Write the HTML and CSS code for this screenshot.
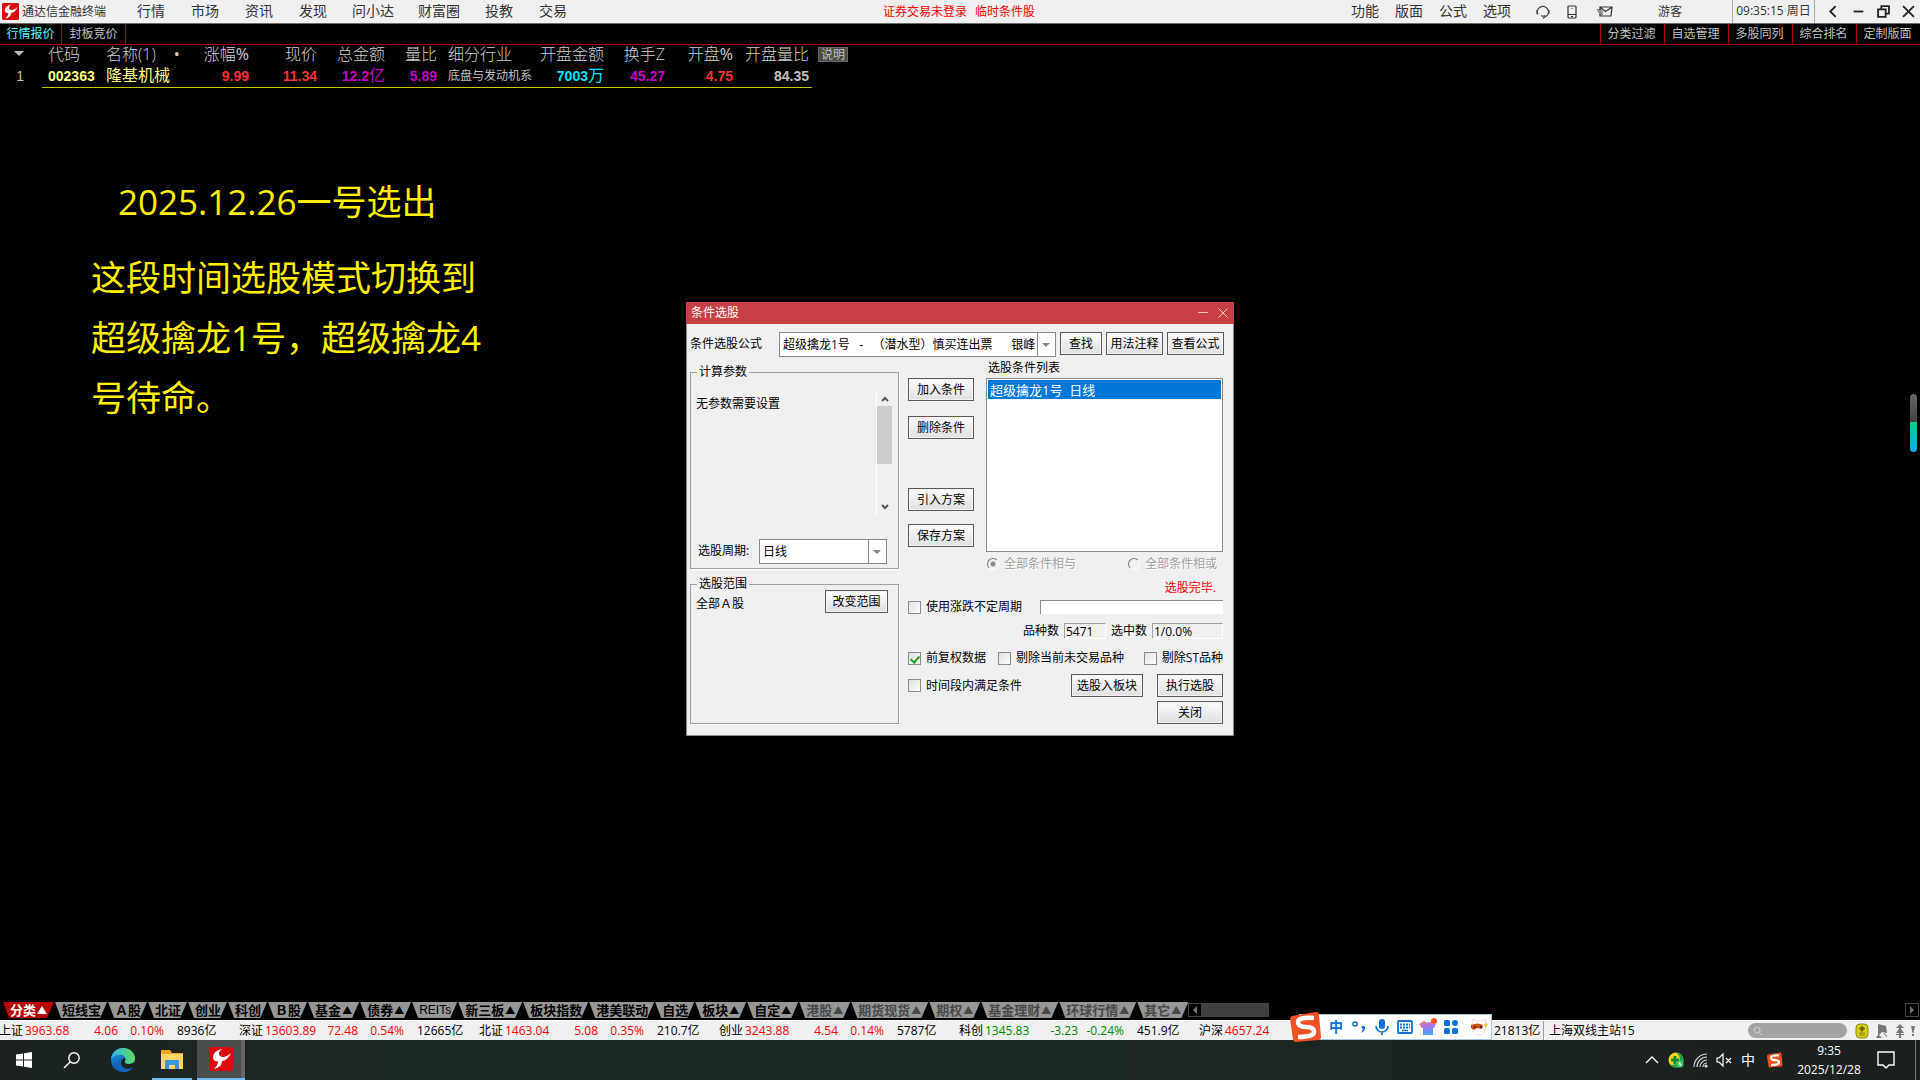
FILE: index.html
```html
<!DOCTYPE html>
<html lang="zh-CN">
<head>
  <meta charset="UTF-8" />
  <meta name="viewport" content="width=device-width, initial-scale=1.0"/>
  <title>通达信金融终端</title>
  <link rel="stylesheet" href="styles.css">
</head>
<body>
  <header class="topbar">
    <svg class="logo" viewBox="0 0 24 24"><use href="#tdx"/></svg>
    <span class="app-name">通达信金融终端</span>
    <nav class="menu">
      <a href="#">行情</a><a href="#">市场</a><a href="#">资讯</a><a href="#">发现</a><a href="#" class="long">问小达</a><a href="#" class="long">财富圈</a><a href="#">投教</a><a href="#">交易</a>
    </nav>
    <p class="notice"><span>证券交易未登录</span><span>临时条件股</span></p>
    <nav class="menu tools">
      <a href="#">功能</a><a href="#">版面</a><a href="#">公式</a><a href="#">选项</a>
    </nav>
    <div class="top-icons">
      <svg width="16" height="16" viewBox="0 0 16 16" fill="none" stroke="#444" stroke-width="1.2"><path d="M3 10.500A5.500 5.500 0 1 1 12.500 11L8 14.500"/><path d="M2 6v4M14 6v4M6 11.500q2 1.500 4 0"/></svg>
      <svg width="10" height="14" viewBox="0 0 10 14" fill="none" stroke="#333" stroke-width="1.200"><rect x="1" y="1" width="8" height="12" rx="1"/><path d="M1 9.500h8M4 11.500h2M4.500 3.500h1"/></svg>
      <svg width="16" height="12" viewBox="0 0 16 12" fill="none" stroke="#333" stroke-width="1.200"><path d="M3 4V1h12l-1 9H3V8M3.500 1.500l5 4 6-4M0 4h5M1 6h5M2 8h4"/></svg>
    </div>
    <span class="guest">游客</span>
    <time class="clock">09:35:15 周日</time>
    <div class="win-buttons">
      <button aria-label="返回"><svg viewBox="0 0 12 12"><path d="M8 1L3 6l5 5"/></svg></button>
      <button aria-label="最小化"><svg viewBox="0 0 12 12"><path d="M1.500 6h9"/></svg></button>
      <button aria-label="还原"><svg viewBox="0 0 12 12"><path d="M1 4h7v7H1zM4 4V1h7v7H8"/></svg></button>
      <button aria-label="关闭"><svg viewBox="0 0 12 12"><path d="M1 1l10 10M11 1L1 11"/></svg></button>
    </div>
  </header>

  <nav class="tabs">
    <a href="#" class="active">行情报价</a><a href="#">封板竞价</a>
    <div class="tabs-right">
      <a href="#">分类过滤</a><a href="#">自选管理</a><a href="#">多股同列</a><a href="#">综合排名</a><a href="#">定制版面</a>
    </div>
  </nav>

  <main>
    <div class="quote-wrap">
      <table class="quotes">
        <colgroup>
          <col class="c-idx"><col class="c-code"><col class="c-name"><col class="c-rise"><col class="c-num"><col class="c-num"><col class="c-ratio"><col class="c-trade"><col class="c-open"><col class="c-turn"><col class="c-num"><col class="c-last">
        </colgroup>
        <thead>
          <tr><th><i class="down"></i></th><th class="l">代码</th><th class="l">名称(1)<b class="dot">•</b></th><th>涨幅<b>%</b></th><th>现价</th><th>总金额</th><th>量比</th><th class="trade">细分行业</th><th>开盘金额</th><th>换手Z</th><th>开盘<b>%</b></th><th>开盘量比</th></tr>
        </thead>
        <tbody>
          <tr><td class="idx">1</td><td class="l yellow">002363</td><td class="l name">隆基机械</td><td class="red">9.99</td><td class="red">11.34</td><td class="purple">12.2<span>亿</span></td><td class="purple">5.89</td><td class="trade">底盘与发动机系</td><td class="cyan">7003<span>万</span></td><td class="purple">45.27</td><td class="red">4.75</td><td>84.35</td></tr>
        </tbody>
      </table>
      <button class="explain">说明</button>
    </div>

    <section class="memo">
      <h1>2025.12.26一号选出</h1>
      <p>这段时间选股模式切换到超级擒龙1号，超级擒龙4号待命。</p>
    </section>

    <div class="side-handle"></div>
  </main>

  <section class="dialog" role="dialog" aria-labelledby="dlgTitle">
    <div class="dialog-title">
      <h2 id="dlgTitle">条件选股</h2>
      <button aria-label="最小化"><svg viewBox="0 0 10 10"><path d="M0 4.500h10"/></svg></button>
      <button aria-label="关闭"><svg viewBox="0 0 10 10"><path d="M.5.5l9 9M9.500.5l-9 9"/></svg></button>
    </div>
    <form class="dialog-body">
      <div class="formula-row">
        <label for="formula">条件选股公式</label>
        <div class="combo"><select id="formula"><option>超级擒龙1号&nbsp;&nbsp;&nbsp;-&nbsp;&nbsp;&nbsp;（潜水型）慎买连出票&nbsp;&nbsp;&nbsp;&nbsp;&nbsp;&nbsp;银峰</option></select></div>
        <button type="button" class="btn find">查找</button>
        <button type="button" class="btn">用法注释</button>
        <button type="button" class="btn">查看公式</button>
      </div>

      <div class="columns">
        <div class="left">
          <fieldset class="params">
            <legend>计算参数</legend>
            <div class="param-area">
              <span>无参数需要设置</span>
              <div class="scrollbar">
                <svg viewBox="0 0 16 16"><path d="M5 11l3-3 3 3"/></svg>
                <div class="thumb"></div>
                <svg viewBox="0 0 16 16"><path d="M5 6l3 3 3-3"/></svg>
              </div>
            </div>
            <div class="period">
              <label for="period">选股周期:</label>
              <div class="combo"><select id="period"><option>日线</option></select></div>
            </div>
          </fieldset>
          <fieldset class="range">
            <legend>选股范围</legend>
            <div class="range-row">
              <span>全部Ａ股</span>
              <button type="button" class="btn">改变范围</button>
            </div>
          </fieldset>
        </div>

        <div class="right">
          <div class="pick">
            <div class="pick-buttons">
              <button type="button" class="btn">加入条件</button>
              <button type="button" class="btn remove">删除条件</button>
              <button type="button" class="btn plan">引入方案</button>
              <button type="button" class="btn">保存方案</button>
            </div>
            <div class="pick-list">
              <label for="conds">选股条件列表</label>
              <select id="conds" size="9"><option selected>超级擒龙1号&nbsp;&nbsp;日线</option></select>
              <div class="radios">
                <label><input type="radio" name="join" checked disabled>全部条件相与</label>
                <label><input type="radio" name="join" disabled>全部条件相或</label>
              </div>
            </div>
          </div>
          <p class="done">选股完毕.</p>
          <div class="row cycle">
            <label><input type="checkbox">使用涨跌不定周期</label>
            <input type="text" class="cycle-text" aria-label="周期">
          </div>
          <div class="row counts">
            <label for="total">品种数</label><input id="total" type="text" class="total" value="5471" readonly>
            <label for="hits">选中数</label><input id="hits" type="text" class="hits" value="1/0.0%" readonly>
          </div>
          <div class="row filters">
            <label><input type="checkbox" checked>前复权数据</label>
            <label><input type="checkbox">剔除当前未交易品种</label>
            <label class="st"><input type="checkbox">剔除ST品种</label>
          </div>
          <div class="row actions">
            <label><input type="checkbox">时间段内满足条件</label>
            <button type="button" class="btn block-btn">选股入板块</button>
            <button type="button" class="btn main-btn">执行选股</button>
          </div>
          <div class="row close-row"><button type="button" class="btn main-btn">关闭</button></div>
        </div>
      </div>
    </form>
  </section>

  <nav class="sheet-tabs">
    <a href="#" class="active">分类<i>▲</i></a><a href="#">短线宝</a><a href="#">Ａ股</a><a href="#">北证</a><a href="#">创业</a><a href="#">科创</a><a href="#">Ｂ股</a><a href="#">基金<i>▲</i></a><a href="#">债券<i>▲</i></a><a href="#" class="latin">REITs</a><a href="#">新三板<i>▲</i></a><a href="#">板块指数</a><a href="#">港美联动</a><a href="#">自选</a><a href="#">板块<i>▲</i></a><a href="#">自定<i>▲</i></a><a href="#" class="dim">港股<i>▲</i></a><a href="#" class="dim">期货现货<i>▲</i></a><a href="#" class="dim">期权<i>▲</i></a><a href="#" class="dim">基金理财<i>▲</i></a><a href="#" class="dim">环球行情<i>▲</i></a><a href="#" class="dim">其它<i>▲</i></a>
    <div class="hscroll">
      <button aria-label="向左"><svg viewBox="0 0 12 12"><path d="M8 2v8L4 6z"/></svg></button>
      <div class="hthumb"></div>
      <button aria-label="向右" class="end"><svg viewBox="0 0 12 12"><path d="M4 2v8l4-4z"/></svg></button>
    </div>
  </nav>

  <footer class="ticker">
    <div class="index up"><b>上证</b><span>3963.68</span><span>4.06</span><span>0.10%</span><em>8936亿</em></div>
    <div class="index up"><b>深证</b><span>13603.89</span><span>72.48</span><span>0.54%</span><em>12665亿</em></div>
    <div class="index up"><b>北证</b><span>1463.04</span><span>5.08</span><span>0.35%</span><em>210.7亿</em></div>
    <div class="index up"><b>创业</b><span>3243.88</span><span>4.54</span><span>0.14%</span><em>5787亿</em></div>
    <div class="index fall"><b>科创</b><span>1345.83</span><span>-3.23</span><span>-0.24%</span><em>451.9亿</em></div>
    <div class="index up hs"><b>沪深</b><span>4657.24</span></div>
    <span class="turnover">21813亿</span>
    <span class="station">上海双线主站15</span>
    <div class="status">
      <label class="search"><svg viewBox="0 0 12 12"><circle cx="5" cy="5" r="3.500"/><path d="M7.500 7.500L11 11"/></svg><input type="text" aria-label="搜索"></label>
      <svg width="14" height="16" viewBox="0 0 14 16"><rect x="1" y="1" width="12" height="14" rx="4" fill="#d9cf1c" stroke="#8f8800"/><path d="M7 3l3 3H8v2H6V6H4zM4 10h6M4 12h6" fill="#6e6800" stroke="#6e6800" stroke-width=".8"/></svg>
      <svg width="14" height="14" viewBox="0 0 14 14" fill="#777"><path d="M3 0l8 2 1 7-5-1-3 3 3 3H1l2-3V7z"/><path d="M9 9l3 4" stroke="#777"/></svg>
      <svg width="10" height="14" viewBox="0 0 10 14" fill="#777"><path d="M5 0l4 4H6v1l3 4H6v1h3v1H6v3H4v-3H1v-1h3V9H1l3-4V4H1z"/></svg>
      <svg width="4" height="14" viewBox="0 0 4 14" fill="#777"><path d="M0 2h4L2.500 9h-1zM1 10h2v2H1z"/></svg>
    </div>
  </footer>

  <aside class="ime">
    <svg class="ime-logo" viewBox="0 0 32 32"><use href="#sogou"/></svg>
    <b>中</b>
    <svg viewBox="0 0 18 18"><circle cx="5" cy="6" r="2" fill="none" stroke="#1070d8" stroke-width="1.500"/><path d="M12 8a2 2 0 0 1 3 2q0 3-4 5l2-4a2 2 0 0 1-1-3z" fill="#1070d8"/></svg>
    <svg viewBox="0 0 18 18"><rect x="6" y="1" width="6" height="10" rx="3" fill="#1070d8"/><path d="M3 8a6 6 0 0 0 12 0M9 14v3" fill="none" stroke="#1070d8" stroke-width="1.600"/></svg>
    <svg viewBox="0 0 18 18"><rect x="2" y="3" width="14" height="12" rx="1" fill="none" stroke="#1070d8" stroke-width="1.800"/><path d="M4 6.500h10M4 9.500h10" stroke="#1070d8" stroke-width="1.800" stroke-dasharray="2 1"/><path d="M6 12.500h6" stroke="#1070d8" stroke-width="1.500"/></svg>
    <svg viewBox="0 0 18 18"><defs><linearGradient id="shirt" x2=".3" y2="1"><stop stop-color="#ff7d62"/><stop offset=".5" stop-color="#a774ec"/><stop offset="1" stop-color="#4aa4ff"/></linearGradient></defs><path d="M5 3q4 3 8 0l4 3-2 4h-1v7H4v-7H3L0 6z" fill="url(#shirt)"/><circle cx="15" cy="3" r="3" fill="#ff5233"/></svg>
    <svg viewBox="0 0 18 18" fill="#1070d8"><rect x="2" y="2" width="6" height="6" rx="1.500"/><rect x="10" y="2" width="6" height="6" rx="3"/><rect x="2" y="10" width="6" height="6" rx="1.500"/><rect x="10" y="10" width="6" height="6" rx="1.500"/></svg>
    <svg viewBox="0 0 18 18"><path d="M3 1l3 2h6l3-2 1 9q-1 7-7 7T2 10z" fill="#fff" stroke="#e9dfe2"/><path d="M1 7q7-3 12 0l-1 4-5-1-3 2-3-2z" fill="#c9500f"/><circle cx="5" cy="9" r="1" fill="#311"/><circle cx="11" cy="9" r="1" fill="#311"/><path d="M16 4l1 2 1 1-1 1-1 2-1-2-1-1 1-1z" fill="#ffc52e"/></svg>
  </aside>

  <div class="taskbar">
    <button class="task" aria-label="开始"><svg width="18" height="18" viewBox="0 0 18 18" fill="#fff"><path d="M1 3.500L8 2.500V8.500H1zM9 2.300L17 1v7.500H9zM1 9.500h7v6L1 14.500zM9 9.500h8V17L9 15.700z"/></svg></button>
    <button class="task" aria-label="搜索"><svg width="18" height="18" viewBox="0 0 18 18" fill="none" stroke="#fff" stroke-width="1.400"><circle cx="11" cy="7" r="5.200"/><path d="M7.300 10.700L1 17"/></svg></button>
    <button class="task" aria-label="Edge">
      <svg width="24" height="24" viewBox="0 0 24 24">
        <defs>
          <linearGradient id="e1" x2="1"><stop stop-color="#2fb6ea"/><stop offset="1" stop-color="#5cdd61"/></linearGradient>
          <linearGradient id="e2" y2="1" x2=".3"><stop stop-color="#1b9de2"/><stop offset="1" stop-color="#1250a4"/></linearGradient>
        </defs>
        <circle cx="12" cy="12" r="12" fill="url(#e2)"/>
        <path d="M0 11C1 4 6 0 12 0c7 0 12 5 12 10 0 4-3 6-6 6-4 0-5-1-4-3 2-4-2-7-6-6-4 0-7 2-8 4z" fill="url(#e1)"/>
        <path d="M14 13c-1 2 1 3 4 3 2 0 4-1 5-2l1 4-3 2c-4 2-11 0-11-5 0-2 1-4 3-5 1 0 2 1 1 3z" fill="#192421"/>
        <path d="M10 11c-3 4 0 10 6 10 3 0 5-1 6-2-3 5-9 6-13 4-5-3-4-10 1-12z" fill="#1764bd"/>
      </svg>
    </button>
    <button class="task open" aria-label="文件资源管理器"><svg width="24" height="22" viewBox="0 0 24 22"><path d="M1 2h9l2 3h11v16H1z" fill="#e8a526"/><path d="M1 6h22v15H1z" fill="#ffd667"/><path d="M5 21v-8q0-1 1-1h12q1 0 1 1v8h-4v-4H9v4z" fill="#3a94de"/></svg></button>
    <button class="task open current" aria-label="通达信">
      <svg width="24" height="24" viewBox="0 0 24 24">
        <g id="tdx"><rect width="24" height="24" rx="2" fill="#dc0a0f"/><path d="M13 2Q8 6 11 9q4 3 11-3-3 7-9 8 0 6-8 8 4-4 4-8-5 1-5-4 0-6 9-8z" fill="#fff"/></g>
      </svg>
    </button>
    <div class="tray">
      <svg viewBox="0 0 16 16" fill="none" stroke="#fff" stroke-width="1.300"><path d="M2 11l6-6 6 6"/></svg>
      <svg viewBox="0 0 16 16"><circle cx="8" cy="8" r="7.500" fill="#f4d520"/><path d="M8 .5a7.500 7.500 0 0 1 0 15q-4 0-6-3 6 1 9-3t-3-9z" fill="#18a94b"/><path d="M7 4v8M3 8h8" stroke="#13893b" stroke-width="3"/><circle cx="12" cy="12" r="3.500" fill="#3ec96c"/><path d="M12 10l-1 2h2l-1 2" stroke="#fff" fill="none"/></svg>
      <svg viewBox="0 0 16 16" fill="none" stroke="#d5d9d8" stroke-width="1.200"><path d="M2 15A13 13 0 0 1 15 2M5 15A10 10 0 0 1 15 5M8 15a7 7 0 0 1 7-7M11 15a4 4 0 0 1 4-4"/><circle cx="14" cy="14" r="1" fill="#fff"/></svg>
      <svg viewBox="0 0 16 16" fill="none" stroke="#fff" stroke-width="1.200"><path d="M1 6h2l4-4v12l-4-4H1zM10 6l5 5M15 6l-5 5"/></svg>
      <b>中</b>
      <svg viewBox="0 0 32 32"><g id="sogou"><path d="M2 5L26 1q3 0 3 3l2 22q0 3-3 3L6 31q-3 0-3-3L0 8q0-2 2-3z" fill="#f05223"/><path d="M24 7Q8 6 8 11t8 5 8 5-16 5" fill="none" stroke="#fff" stroke-width="4.500"/></g></svg>
      <time><span>9:35</span><span>2025/12/28</span></time>
      <svg class="note" viewBox="0 0 18 18" fill="none" stroke="#fff" stroke-width="1.400"><path d="M1 1h16v13h-5l-3 3-3-3H1z"/></svg>
      <i class="peek"></i>
    </div>
  </div>
</body>
</html>
```

FILE: styles.css
```css
* { box-sizing: border-box; }
body { margin: 0; height: 100vh; display: flex; flex-direction: column; background: #000; color: #c0c0c0; font: 12px/16px "Open Sans", "Noto Sans CJK SC", sans-serif; overflow: hidden; }
a { color: inherit; text-decoration: none; }
h1, h2, p { margin: 0; font-weight: normal; }
button, input, select { font: inherit; color: inherit; margin: 0; padding: 0; border: 0; background: none; border-radius: 0; outline: 0; }
svg { display: block; flex: none; }
em, i { font-style: normal; }

/* top menu */
.topbar { display: flex; align-items: center; height: 24px; background: #f0f0f0; border-bottom: 1px solid #6a6a6a; color: #333; line-height: 14px; white-space: nowrap; }
.logo { width: 17px; height: 19px; margin: 0 3px 0 2px; }
.app-name { width: 102px; }
.menu { display: flex; padding-bottom: 2px; font-size: 14px; }
.menu a { width: 54px; text-align: center; }
.menu .long { width: 66px; }
.notice { flex: 1; padding-left: 303px; color: #f00; }
.notice span { margin-right: 8px; }
.tools a { width: 44px; }
.top-icons { display: flex; align-items: center; gap: 16px; padding-left: 16px; }
.top-icons svg:last-child { margin-left: 4px; }
.guest { margin: 0 50px 0 45px; }
.clock { align-self: stretch; width: 83px; line-height: 22px; text-align: center; border-left: 1px solid #aaa; border-right: 1px solid #aaa; }
.win-buttons { display: flex; gap: 12px; padding: 0 5px 0 12px; }
.win-buttons svg { width: 13px; height: 13px; fill: none; stroke: #222; stroke-width: 1.700; }

.tabs { display: flex; height: 21px; border-bottom: 1px solid #b00000; line-height: 20px; }
.tabs a { width: 64px; text-align: center; border-right: 1px solid #b00000; }
.tabs .active { width: 62px; color: #54fcfc; }
.tabs-right { display: flex; margin-left: auto; }
.tabs-right a { padding-right: 2px; border-right: 0; border-left: 1px solid #b00000; }

/* quotes */
main { flex: 1; position: relative; }
.quote-wrap { display: flex; align-items: flex-start; }
.quotes { table-layout: fixed; width: 812px; border-collapse: collapse; white-space: nowrap; }
.c-idx { width: 42px; }
.c-code { width: 58px; }
.c-name { width: 84px; }
.c-rise { width: 65px; }
.c-num { width: 68px; }
.c-ratio { width: 52px; }
.c-trade { width: 95px; }
.c-open { width: 72px; }
.c-turn { width: 61px; }
.c-last { width: 79px; }
.quotes th { height: 20px; padding: 0 0 2px; font-size: 16px; font-weight: 300; text-align: right; line-height: 18px; color: #d0d0d0; }
.quotes td { height: 22px; padding: 0; font: bold 14px/20px "Liberation Sans", "Noto Sans CJK SC", sans-serif; text-align: right; border-bottom: 1px solid #c8c800; }
.quotes td span { font-size: 16px; font-weight: normal; }
.quotes th:last-child, .quotes td:last-child { padding-right: 3px; }
.quotes .l { text-align: left; padding-left: 6px; }
.quotes .idx { border: 0; padding-right: 18px; font-weight: normal; }
.quotes th.trade { text-align: left; padding-left: 11px; }
.quotes td.trade { text-align: left; padding-left: 11px; font-size: 12px; font-weight: normal; overflow: hidden; }
.quotes .name { color: #ffff80; font-size: 16px; font-weight: normal; }
.yellow { color: #ffff80; }
.red { color: #ff3232; }
.purple { color: #c000c0; }
.cyan { color: #00e6ff; }
.down { display: inline-block; margin-right: 18px; vertical-align: 4px; border: 5px solid transparent; border-top-color: #c0c0c0; border-bottom: 0; }
.dot { margin-left: 18px; }
.explain { margin: 2px 0 0 6px; width: 30px; height: 15px; line-height: 13px; background: #4c4c44; border: 1px solid #666; }

/* yellow memo */
.memo { padding: 84px 0 0 91px; color: #fff100; font-size: 35px; line-height: 60px; }
.memo h1 { padding-left: 27px; font-size: 35px; margin-bottom: 16px; }
.memo p { width: 400px; }

.side-handle { position: absolute; right: 3px; top: 349px; width: 7px; height: 58px; border-radius: 4px; background: linear-gradient(#666, #444 48%, #10cf8c 48%, #16a8f0); }

/* stock picking dialog */
.dialog { position: absolute; top: 302px; left: 50%; width: 548px; margin-left: -274px; background: #f0f0f0; color: #000; border: 1px solid #8a8a8a; border-top: 0; white-space: nowrap; }
.dialog-title { display: flex; gap: 10px; align-items: center; height: 22px; margin: 0 -1px; padding: 0 6px 0 5px; background: #c84044; color: #fff; }
.dialog-title h2 { flex: 1; font-size: 12px; }
.dialog-title svg { width: 10px; height: 10px; fill: none; stroke: #f0c8c8; }
.dialog-body { padding: 8px 10px 11px 3px; }
.formula-row { display: flex; gap: 4px; margin-right: -1px; }
.formula-row label { width: 85px; line-height: 24px; }
.formula-row .combo { flex: 1; }
.formula-row .btn { width: 57px; }
.formula-row .find { width: 42px; }
.btn { height: 23px; padding: 0; text-align: center; line-height: 19px; border: 1px solid #5a5a5a; background: linear-gradient(#fdfdfd, #dfdfdf); box-shadow: inset 0 0 0 1px #f4f4f4; }
.combo { position: relative; height: 25px; }
.combo select { appearance: none; width: 100%; height: 25px; padding-left: 3px; background: #fff linear-gradient(#8a8a8a, #8a8a8a) no-repeat right 17px top / 1px 25px; border: 1px solid #8a8a8a; }
.combo::after { content: ""; position: absolute; right: 6px; top: 11px; border: 4px solid transparent; border-top-color: #858585; border-bottom: 0; pointer-events: none; }

.columns { display: flex; gap: 9px; }
.left { width: 209px; padding-top: 7px; }
fieldset { min-width: 0; margin: 0; padding: 0; border: 1px solid #a0a0a0; box-shadow: 1px 1px #fff; }
legend { margin-left: 6px; padding: 0 2px; height: 16px; }
.params { margin-bottom: 7px; }
.param-area { display: flex; justify-content: space-between; height: 125px; margin: 10px 6px 24px 5px; }
.param-area span { padding-top: 6px; }
.scrollbar { display: flex; flex-direction: column; width: 16px; border-left: 1px solid #fff; }
.scrollbar svg { width: 16px; height: 16px; fill: none; stroke: #555; stroke-width: 2; }
.scrollbar .thumb { height: 58px; margin-bottom: auto; background: #cdcdcd; }
.period { display: flex; justify-content: space-between; padding: 0 11px 4px 7px; line-height: 24px; }
.period .combo { width: 128px; line-height: 16px; }
.range { height: 148px; }
.range-row { display: flex; justify-content: space-between; align-items: center; margin-top: -2px; padding: 0 10px 0 5px; }
.range-row span { padding-top: 4px; }
.range-row .btn { width: 63px; }

.right { flex: 1; }
.pick { display: flex; gap: 12px; }
.pick-buttons { display: flex; flex-direction: column; gap: 13px; width: 66px; padding-top: 21px; }
.remove { margin-top: 2px; }
.plan { margin-top: 36px; }
.pick-list { flex: 1; padding-top: 3px; }
.pick-list > label { display: block; padding-left: 2px; margin-bottom: 2px; }
.pick-list select { display: block; width: 100%; height: 174px; padding: 1px; font-size: 13px; background: #fff; border: 1px solid #8a8a8a; overflow: hidden; }
.pick-list option { height: 19px; min-height: 19px; padding: 0 2px; line-height: 19px; }
.pick-list option:checked { background: linear-gradient(#0078d7, #0078d7); -webkit-text-fill-color: #fff; }
.radios { display: flex; justify-content: space-between; margin-top: 4px; padding: 0 6px 0 1px; }
.right label { display: flex; align-items: center; gap: 5px; }
.radios label { color: #a0a0a0; text-shadow: 1px 1px #fff; }
input[type=radio] { appearance: none; width: 12px; height: 12px; border: 1px solid; border-color: #777 #fff #fff #777; border-radius: 50%; }
input[type=radio]:checked { background: radial-gradient(#888 2px, transparent 3px); }
input[type=checkbox] { appearance: none; display: flex; justify-content: center; width: 13px; height: 13px; border: 1px solid #8a8a8a; background: linear-gradient(135deg, #dfdfda, #fff); }
input[type=checkbox]:checked::after { content: ""; width: 4px; height: 7px; margin-top: 1px; border: solid #1a9f1a; border-width: 0 2px 2px 0; transform: rotate(40deg); }
.done { margin: 8px 7px 3px; color: #f00; text-align: right; }
.row { display: flex; align-items: center; }
.cycle { justify-content: space-between; height: 16px; margin-bottom: 8px; }
.cycle-text { width: 183px; height: 14px; background: #fff; border: 1px solid #8a8a8a; border-right: 0; border-bottom: 0; }
.counts { justify-content: flex-end; gap: 5px; margin-bottom: 11px; }
.counts input { height: 16px; padding-left: 1px; line-height: 14px; border: 1px solid; border-color: #a0a0a0 #fff #fff #a0a0a0; }
.counts .total { width: 42px; }
.counts .hits { width: 71px; }
.filters { gap: 12px; margin-bottom: 8px; }
.filters .st { margin-left: auto; }
.actions label { flex: 1; }
.main-btn { width: 66px; }
.block-btn { width: 72px; margin-right: 14px; }
.close-row { justify-content: flex-end; margin-top: 4px; }

/* category sheets */
.sheet-tabs { display: flex; height: 18px; padding-left: 2px; font-size: 13px; font-weight: bold; line-height: 16px; color: #000; white-space: nowrap; }
.sheet-tabs a { height: 16px; padding: 0 6px 0 8px; background: #969696; clip-path: polygon(1px 0, 100% 0, calc(100% - 7px) 100%, 7px 100%); }
.sheet-tabs i { display: inline-block; width: 12px; font-size: 10px; text-align: center; vertical-align: top; }
.sheet-tabs .active { background: #b80000; color: #fff; }
.sheet-tabs .dim { color: #484848; }
.sheet-tabs .latin { font-family: "Liberation Sans", sans-serif; font-size: 12px; font-weight: normal; }
.hscroll { flex: 1; display: flex; align-items: center; height: 16px; padding-right: 1px; }
.hscroll button { width: 14px; height: 14px; border: 1px solid #444; }
.hscroll svg { width: 12px; height: 12px; fill: #777; }
.hthumb { width: 67px; height: 14px; margin-right: auto; background: #404040; }

/* index ticker */
.ticker { display: flex; height: 20px; background: #f0f0f0; border-top: 1px solid #fff; color: #000; line-height: 20px; white-space: nowrap; }
.index { display: grid; grid-template-columns: 26px 53px 40px 46px 75px; width: 240px; flex: none; }
.index:first-child { margin-left: -1px; }
.index b { font-weight: normal; }
.index span + span { text-align: right; }
.index em { padding-left: 13px; }
.up span { color: #f00; }
.fall span { color: #008a00; }
.hs { width: 295px; }
.turnover { width: 50px; border-right: 1px solid #a0a0a0; }
.station { padding-left: 5px; }
.status { display: flex; align-items: center; gap: 6px; margin-left: auto; padding-right: 5px; }
.search { display: flex; align-items: center; width: 99px; height: 15px; margin-right: 2px; padding-left: 5px; background: #a3a3a3; border-radius: 8px; }
.search svg { width: 10px; height: 10px; fill: none; stroke: #ddd; }
.search input { width: 70px; }

/* input method bar floating over the ticker */
.ime { position: absolute; left: 1290px; bottom: 40px; display: flex; align-items: center; gap: 5px; width: 202px; height: 26px; padding-right: 3px; background: linear-gradient(#fff, #fff) no-repeat right / 190px; border: solid #a8c8ee; border-width: 1px 1px 1px 0; border-image: linear-gradient(90deg, transparent 10px, #a8c8ee 10px) 1; color: #1070d8; }
.ime svg { width: 18px; height: 18px; }
.ime .ime-logo { width: 32px; height: 32px; }
.ime b { width: 18px; font-size: 14px; text-align: center; }
.ime svg:last-child { margin-left: auto; }

/* windows taskbar */
.taskbar { display: flex; height: 40px; background: linear-gradient(90deg, #1c2322, #1a2922 35%, #1b2521 70%, #1b1f20); color: #fff; }
.task { display: flex; align-items: center; justify-content: center; width: 48px; }
.task:nth-child(2) { margin-right: 3px; }
.open { width: 40px; margin-left: 5px; border-bottom: 2px solid #76b9ed; }
.current { width: 48px; background: linear-gradient(90deg, #4a4e4e 44px, #636767 44px); }
.tray { display: flex; align-items: center; margin-left: auto; }
.tray svg { width: 16px; height: 16px; margin-right: 8px; }
.tray b { width: 14px; margin: 0 12px 0 1px; font-size: 14px; font-weight: normal; }
.tray time { width: 72px; text-align: center; line-height: 19px; margin-left: 2px; }
.tray time span { display: block; }
.tray .note { width: 18px; height: 18px; margin: 0 20px 0 12px; }
.peek { align-self: stretch; width: 5px; border-left: 1px solid #777; }
```
